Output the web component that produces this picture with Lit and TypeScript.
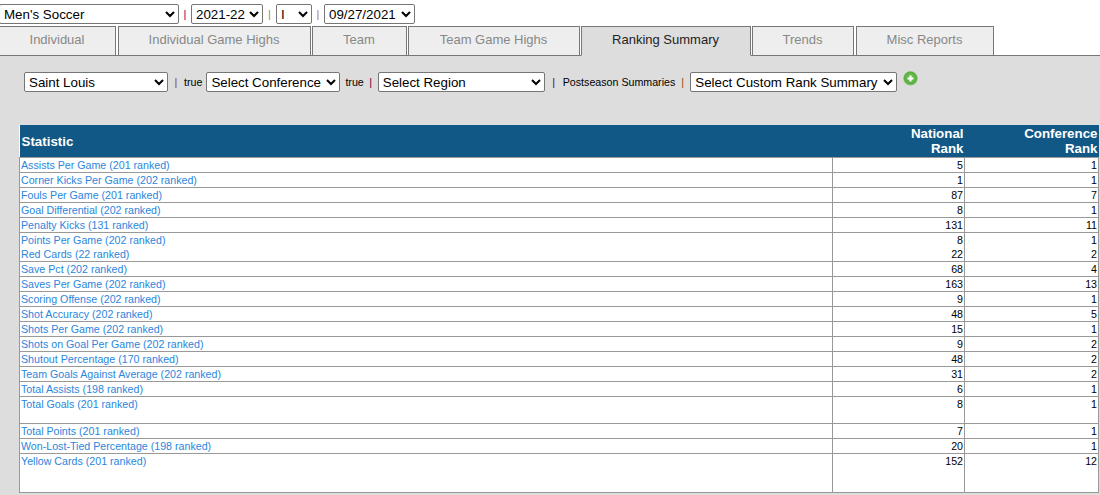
import { LitElement, html, css } from "lit";
import { customElement } from "lit/decorators.js";

const rows: [string, number, number, string?][] = [
  ["Assists Per Game (201 ranked)", 5, 1],
  ["Corner Kicks Per Game (202 ranked)", 1, 1],
  ["Fouls Per Game (201 ranked)", 87, 7],
  ["Goal Differential (202 ranked)", 8, 1],
  ["Penalty Kicks (131 ranked)", 131, 11],
  ["Points Per Game (202 ranked)", 8, 1, "joined"],
  ["Red Cards (22 ranked)", 22, 2, "short"],
  ["Save Pct (202 ranked)", 68, 4],
  ["Saves Per Game (202 ranked)", 163, 13],
  ["Scoring Offense (202 ranked)", 9, 1],
  ["Shot Accuracy (202 ranked)", 48, 5],
  ["Shots Per Game (202 ranked)", 15, 1],
  ["Shots on Goal Per Game (202 ranked)", 9, 2],
  ["Shutout Percentage (170 ranked)", 48, 2],
  ["Team Goals Against Average (202 ranked)", 31, 2],
  ["Total Assists (198 ranked)", 6, 1],
  ["Total Goals (201 ranked)", 8, 1, "tall"],
  ["Total Points (201 ranked)", 7, 1],
  ["Won-Lost-Tied Percentage (198 ranked)", 20, 1],
  ["Yellow Cards (201 ranked)", 152, 12, "xl"],
];

const tabs = ["Individual", "Individual Game Highs", "Team", "Team Game Highs", "Ranking Summary", "Trends", "Misc Reports"];
const tabWidths = ["w116", "w193", "w95", "w172", "w170", "w102", "w138"];

@customElement("app-root")
export class AppRoot extends LitElement {
  static styles = css`
    :host { display: block; width: 1100px; height: 495px; overflow: hidden; background: #fff; font-family: "Liberation Sans", Arial, sans-serif; font-size: 11px; color: #000; }
    select { height: 20px; font-family: "Liberation Sans", Arial, sans-serif; font-size: 13.33px; background: #fff; color: #000; border: 1px solid #767676; border-radius: 2px; padding: 0; margin: 0; box-sizing: border-box; }
    .top { display: flex; align-items: center; height: 26px; padding-top: 2px; margin-left: -1px; box-sizing: border-box; }
    .sep { display: inline-block; width: 12px; text-align: center; font-size: 11px; line-height: 14px; }
    .s1 { color: #800060; } .s2 { color: #8a8a70; } .s3 { color: #b87818; }
    .s4 { color: #8a5008; } .s5 { color: #600040; }
    .tabs { display: flex; height: 30px; box-sizing: border-box; border-bottom: 1px solid #777; }
    .tab { box-sizing: border-box; height: 30px; background: #eee; border: 1px solid #777; color: #888; font-size: 13px; display: flex; align-items: center; justify-content: center; padding: 0 1px 3px 0; margin-right: 1px; }
    .tab.first { border-left: none; }
    .tab.active { background: #ddd; color: #222; border-bottom-color: #ddd; }
    .w116 { width: 116px; margin-right: 2px; } .w193 { width: 193px; } .w95 { width: 95px; } .w172 { width: 172px; }
    .w170 { width: 170px; } .w102 { width: 102px; margin-right: 2px; } .w138 { width: 138px; }
    .panel { background: #ddd; height: 439px; padding: 16px 0 0 19px; box-sizing: border-box; }
    .filters { display: flex; align-items: center; height: 20px; margin-left: 5px; }
    .lbl { font-size: 10.67px; color: #000; }
    .add { margin: -7px 0 0 6px; display: block; }
    table { margin-top: 33px; width: 1080px; table-layout: fixed; border-collapse: collapse; background: #fff; }
    th { background: #125886; color: #fff; font-size: 13.33px; line-height: 15px; padding: 1px; height: 29px; text-align: right; vertical-align: middle; }
    th.st { text-align: left; padding-left: 2px; }
    td { border: 1px solid #999; padding: 0 1px; font-size: 10.67px; line-height: 14px; height: 14px; vertical-align: top; text-align: right; }
    td.st { text-align: left; color: #2b86dd; }
    tr.joined td { border-bottom: none; }
    tr.short td { border-top: none; }
    tr.tall td { height: 26px; }
    tr.xl td { height: 38px; }
  `;

  render() {
    return html`
      <div class="top">
        <select style="width:180px"><option>Men's Soccer</option></select>
        <span class="sep s1">|</span>
        <select style="width:72px"><option>2021-22</option></select>
        <span class="sep s2" style="width:13px">|</span>
        <select style="width:36px"><option>I</option></select>
        <span class="sep s3">|</span>
        <select style="width:91px"><option>09/27/2021</option></select>
      </div>
      <div class="tabs">
        ${tabs.map((t, i) => html`<div class="tab ${tabWidths[i]} ${i === 0 ? "first" : ""} ${i === 4 ? "active" : ""}">${t}</div>`)}
      </div>
      <div class="panel">
        <div class="filters">
          <select style="width:144px"><option>Saint Louis</option></select>
          <span class="sep s4" style="width:16px">|</span>
          <span class="lbl">true</span>
          <select style="width:134px;margin-left:4px"><option>Select Conference</option></select>
          <span class="lbl" style="margin-left:5px">true</span>
          <span class="sep s5" style="width:14px">|</span>
          <select style="width:167px"><option>Select Region</option></select>
          <span class="sep s5" style="width:18px">|</span>
          <span class="lbl">Postseason Summaries</span>
          <span class="sep s4" style="width:15px">|</span>
          <select style="width:207px"><option>Select Custom Rank Summary</option></select>
          <svg class="add" width="15" height="15" viewBox="0 0 15 15">
            <defs>
              <radialGradient id="g" cx="50%" cy="45%" r="55%">
                <stop offset="0%" stop-color="#7ccb5a"></stop>
                <stop offset="75%" stop-color="#5aad42"></stop>
                <stop offset="100%" stop-color="#9ccf8c"></stop>
              </radialGradient>
            </defs>
            <circle cx="7.5" cy="7.5" r="7.2" fill="url(#g)"></circle>
            <path d="M7.5 4.5v6M4.5 7.5h6" stroke="#fff" stroke-width="2"></path>
          </svg>
        </div>
        <table>
          <colgroup>
            <col style="width:813px" />
            <col style="width:132px" />
            <col style="width:134px" />
          </colgroup>
          <thead>
            <tr><th class="st">Statistic</th><th>National<br />Rank</th><th>Conference<br />Rank</th></tr>
          </thead>
          <tbody>
            ${rows.map(r => html`<tr class="${r[3] ?? ""}"><td class="st">${r[0]}</td><td>${r[1]}</td><td>${r[2]}</td></tr>`)}
          </tbody>
        </table>
      </div>
    `;
  }
}
